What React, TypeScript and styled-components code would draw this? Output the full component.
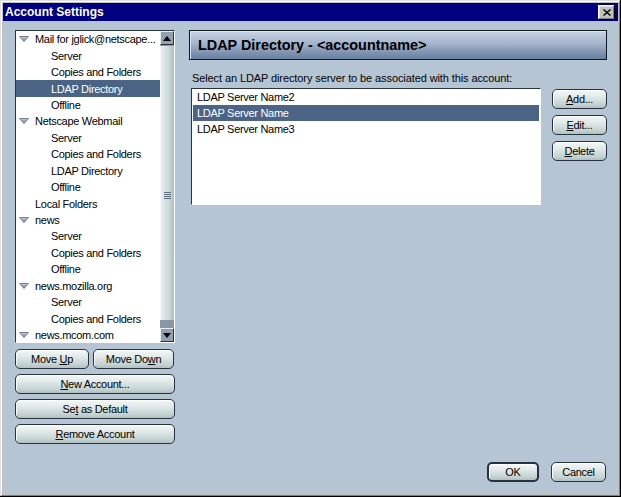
import React from "react";
import styled, { createGlobalStyle } from "styled-components";

const Global = createGlobalStyle`
  html, body { margin: 0; padding: 0; }
  body { font-family: "Liberation Sans", Arial, sans-serif; font-size: 11px; background: #fff; }
`;

const Window = styled.div`
  width: 621px;
  height: 497px;
  box-sizing: border-box;
  background: #c0c0c0;
  padding: 3px;
  box-shadow: inset -1px -1px #000, inset 1px 1px #dfdfdf, inset -2px -2px #808080, inset 2px 2px #fff;
  display: flex;
  flex-direction: column;
`;

const TitleBar = styled.div`
  height: 18px;
  background: #000080;
  color: #fff;
  font: bold 12px "Liberation Sans", Arial, sans-serif;
  display: flex;
  align-items: center;
  justify-content: space-between;
  padding: 0 3px 0 2px;
`;

const CloseBtn = styled.div`
  width: 17px;
  height: 15px;
  box-sizing: border-box;
  background: #c0c0c0;
  box-shadow: inset -1px -1px #000, inset 1px 1px #fff, inset -2px -2px #808080, inset 2px 2px #dfdfdf;
  display: flex;
  align-items: center;
  justify-content: center;
`;

const Body = styled.div`
  flex: 1;
  background: #b6c5d4;
  display: flex;
  gap: 14px;
  padding: 9px 11px 12px 12px;
`;

const LeftCol = styled.div`
  width: 160px;
  display: flex;
  flex-direction: column;
  gap: 5px;
`;

const Tree = styled.div`
  height: 313px;
  box-sizing: border-box;
  background: #fff;
  border: 1px solid #2a3440;
  border-right-color: #fff;
  border-bottom-color: #fff;
  display: flex;
  margin-bottom: 1px;
  overflow: hidden;
`;

const TreeRows = styled.div`
  flex: 1;
  overflow: hidden;
`;

const Row = styled.div<{ $level: number; $sel?: boolean }>`
  height: 16.45px;
  display: flex;
  align-items: center;
  padding-left: ${(p) => (p.$level === 0 ? 3 : 35)}px;
  background: ${(p) => (p.$sel ? "#4b6385" : "transparent")};
  color: ${(p) => (p.$sel ? "#fff" : "#000")};
  white-space: nowrap;
  letter-spacing: -0.3px;
  font-size: 11px;
`;

const Twisty = styled.span<{ $show: boolean }>`
  width: 10px;
  height: 6px;
  margin-right: 6px;
  display: inline-flex;
  visibility: ${(p) => (p.$show ? "visible" : "hidden")};
`;

const ScrollBar = styled.div`
  width: 14px;
  display: flex;
  flex-direction: column;
  background: #8898a8;
`;

const ScrollBtn = styled.div`
  height: 14px;
  box-sizing: border-box;
  background: #93a2b2;
  border: 1px solid #e8eef2;
  border-right-color: #2a3440;
  border-bottom-color: #2a3440;
  display: flex;
  align-items: center;
  justify-content: center;
`;

const Thumb = styled.div`
  height: 274px;
  box-sizing: border-box;
  margin-top: 1px;
  background: linear-gradient(to right, #e8f0f0, #cbd8d8 60%, #aebebe);
  border-left: 1px solid #f4f8f8;
  display: flex;
  align-items: flex-start;
  justify-content: center;
  padding-top: 146px;
`;

const Grip = styled.div`
  width: 7px;
  height: 7px;
  background: repeating-linear-gradient(to bottom, #60707c 0 1px, transparent 1px 2px);
`;

const Track = styled.div`
  flex: 1;
  background: #8898a8;
`;

const BtnRow = styled.div`
  display: flex;
  gap: 4px;
`;

const Btn = styled.button<{ $w?: number; $default?: boolean }>`
  width: ${(p) => (p.$w ? `${p.$w}px` : "100%")};
  height: 20px;
  box-sizing: border-box;
  border: ${(p) => (p.$default ? 2 : 1)}px solid #27323e;
  border-radius: 5px;
  background: linear-gradient(to bottom, #f4f8f8 0%, #e2eaea 35%, #c4d2d2 80%, #b0c0c0 100%);
  box-shadow: inset 1px 1px 0 #fff;
  font: 11px "Liberation Sans", Arial, sans-serif;
  letter-spacing: -0.3px;
  color: #000;
  padding: 0;
  display: flex;
  align-items: center;
  justify-content: center;
  flex-shrink: 0;
`;

const U = styled.span`
  text-decoration: underline;
`;

const RightCol = styled.div`
  flex: 1;
  display: flex;
  flex-direction: column;
`;

const Header = styled.div`
  height: 30px;
  box-sizing: border-box;
  border: 1px solid #101820;
  box-shadow: inset 1px 1px 0 #dde6f0;
  background: linear-gradient(to bottom, #c8d4e4 0%, #a4b4cc 45%, #7c90ae 80%, #6a80a0 100%);
  display: flex;
  align-items: center;
  padding-left: 8px;
  font: bold 14.4px "Liberation Sans", Arial, sans-serif;
  color: #000;
`;

const Label = styled.div`
  margin: 12px 0 3px 3px;
  height: 13px;
  line-height: 13px;
  letter-spacing: -0.1px;
`;

const ListRow = styled.div`
  display: flex;
  gap: 11px;
  margin-left: 2px;
`;

const ListBox = styled.div`
  width: 350px;
  height: 117px;
  box-sizing: border-box;
  background: #fff;
  border: 1px solid #2a3440;
  border-right-color: #fff;
  border-bottom-color: #fff;
  padding: 0 1px;
`;

const ListItem = styled.div<{ $sel?: boolean }>`
  height: 16px;
  display: flex;
  align-items: center;
  padding-left: 4px;
  background: ${(p) => (p.$sel ? "#4b6385" : "transparent")};
  color: ${(p) => (p.$sel ? "#fff" : "#000")};
  letter-spacing: -0.3px;
`;

const SideBtns = styled.div`
  display: flex;
  flex-direction: column;
  gap: 6px;
  padding-top: 1px;
`;

const Footer = styled.div`
  margin-top: auto;
  display: flex;
  justify-content: flex-end;
  gap: 12px;
  padding-right: 1px;
`;

const TwistyIcon = () => (
  <svg width="10" height="6" viewBox="0 0 10 6">
    <defs>
      <linearGradient id="tg" x1="0" y1="0" x2="0" y2="1">
        <stop offset="0" stopColor="#c8d2dc" />
        <stop offset="1" stopColor="#6a7886" />
      </linearGradient>
    </defs>
    <polygon points="0.5,0.5 9.5,0.5 5,5.5" fill="url(#tg)" stroke="#5a6874" strokeWidth="0.8" />
  </svg>
);

const Arrow = ({ up }: { up: boolean }) => (
  <svg width="8" height="5" viewBox="0 0 8 5">
    <polygon points={up ? "0,5 8,5 4,0" : "0,0 8,0 4,5"} fill="#000" />
  </svg>
);

type Item = { label: string; level: number; twisty?: boolean; sel?: boolean };

const treeItems: Item[] = [
  { label: "Mail for jglick@netscape...", level: 0, twisty: true },
  { label: "Server", level: 1 },
  { label: "Copies and Folders", level: 1 },
  { label: "LDAP Directory", level: 1, sel: true },
  { label: "Offline", level: 1 },
  { label: "Netscape Webmail", level: 0, twisty: true },
  { label: "Server", level: 1 },
  { label: "Copies and Folders", level: 1 },
  { label: "LDAP Directory", level: 1 },
  { label: "Offline", level: 1 },
  { label: "Local Folders", level: 0, twisty: false },
  { label: "news", level: 0, twisty: true },
  { label: "Server", level: 1 },
  { label: "Copies and Folders", level: 1 },
  { label: "Offline", level: 1 },
  { label: "news.mozilla.org", level: 0, twisty: true },
  { label: "Server", level: 1 },
  { label: "Copies and Folders", level: 1 },
  { label: "news.mcom.com", level: 0, twisty: true },
];

export default function App() {
  return (
    <>
      <Global />
      <Window>
        <TitleBar>
          <span>Account Settings</span>
          <CloseBtn>
            <svg width="8" height="7" viewBox="0 0 8 7">
              <path d="M0.5 0.5 L7.5 6.5 M7.5 0.5 L0.5 6.5" stroke="#000" strokeWidth="1.4" />
            </svg>
          </CloseBtn>
        </TitleBar>
        <Body>
          <LeftCol>
            <Tree>
              <TreeRows>
                {treeItems.map((it, i) => (
                  <Row key={i} $level={it.level} $sel={it.sel}>
                    {it.level === 0 && (
                      <Twisty $show={!!it.twisty}>
                        <TwistyIcon />
                      </Twisty>
                    )}
                    {it.label}
                  </Row>
                ))}
              </TreeRows>
              <ScrollBar>
                <ScrollBtn>
                  <Arrow up />
                </ScrollBtn>
                <Thumb>
                  <Grip />
                </Thumb>
                <Track />
                <ScrollBtn>
                  <Arrow up={false} />
                </ScrollBtn>
              </ScrollBar>
            </Tree>
            <BtnRow>
              <Btn $w={74}>
                Move&nbsp;<U>U</U>p
              </Btn>
              <Btn $w={81}>
                Move Do<U>w</U>n
              </Btn>
            </BtnRow>
            <Btn>
              <U>N</U>ew Account...
            </Btn>
            <Btn>
              Se<U>t</U>&nbsp;as Default
            </Btn>
            <Btn>
              <U>R</U>emove Account
            </Btn>
          </LeftCol>
          <RightCol>
            <Header>LDAP Directory - &lt;accountname&gt;</Header>
            <Label>Select an LDAP directory server to be associated with this account:</Label>
            <ListRow>
              <ListBox>
                <ListItem>LDAP Server Name2</ListItem>
                <ListItem $sel>LDAP Server Name</ListItem>
                <ListItem>LDAP Server Name3</ListItem>
              </ListBox>
              <SideBtns>
                <Btn $w={55}>
                  <U>A</U>dd...
                </Btn>
                <Btn $w={55}>
                  <U>E</U>dit...
                </Btn>
                <Btn $w={55}>
                  <U>D</U>elete
                </Btn>
              </SideBtns>
            </ListRow>
            <Footer>
              <Btn $w={52} $default>
                OK
              </Btn>
              <Btn $w={55}>Cancel</Btn>
            </Footer>
          </RightCol>
        </Body>
      </Window>
    </>
  );
}
